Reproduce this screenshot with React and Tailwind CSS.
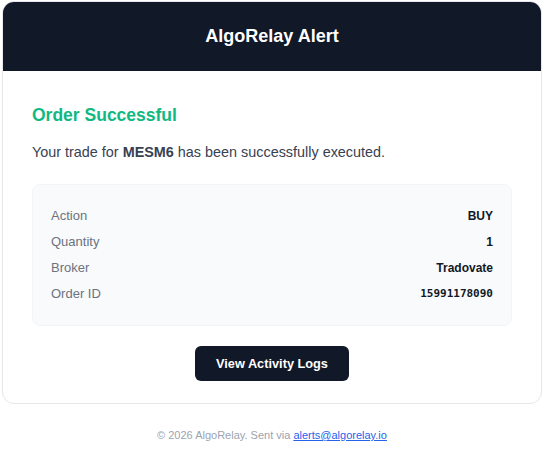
import React from 'react';

// Order confirmation email card
const details = [
  { label: 'Action', value: 'BUY' },
  { label: 'Quantity', value: '1' },
  { label: 'Broker', value: 'Tradovate' },
  { label: 'Order ID', value: '15991178090', mono: true },
];

export default function App() {
  return (
    <div className="min-h-screen bg-white font-['Liberation_Sans',Arial,sans-serif] px-[2px] pt-[1px]">
      <div className="border border-gray-200 rounded-xl overflow-hidden bg-white">
        {/* Header */}
        <div className="bg-[#111827] h-[69px] flex items-center justify-center">
          <h1 className="text-white font-bold text-[18px]">AlgoRelay Alert</h1>
        </div>

        {/* Body */}
        <div className="px-[29px] pt-[31px] pb-[22px]">
          <h2 className="text-[#10b981] font-bold text-[17.5px] leading-[26px]">Order Successful</h2>
          <p className="mt-[13px] text-[#374151] text-[14.4px] leading-[22px]">
            Your trade for <strong>MESM6</strong> has been successfully executed.
          </p>

          <div className="mt-[21px] bg-[#f9fafb] border border-gray-100 rounded-lg p-[18px]">
            {details.map((d) => (
              <div key={d.label} className="flex items-center justify-between h-[26px]">
                <span className="text-[#6b7280] text-[13px]">{d.label}</span>
                <span
                  className={
                    d.mono
                      ? "text-[#111827] font-bold text-[11px] font-['DejaVu_Sans_Mono',monospace]"
                      : 'text-[#111827] font-bold text-[12px]'
                  }
                >
                  {d.value}
                </span>
              </div>
            ))}
          </div>

          <div className="mt-[20px] flex justify-center">
            <a
              href="#"
              className="bg-[#111827] text-white font-bold text-[12.75px] rounded-md w-[154px] h-[35px] flex items-center justify-center"
            >
              View Activity Logs
            </a>
          </div>
        </div>
      </div>

      {/* Footer */}
      <p className="mt-[23px] text-center text-[11px] text-[#9ca3af]">
        © 2026 AlgoRelay. Sent via{' '}
        <a href="#" className="text-[#2563eb] underline">alerts@algorelay.io</a>
      </p>
    </div>
  );
}
